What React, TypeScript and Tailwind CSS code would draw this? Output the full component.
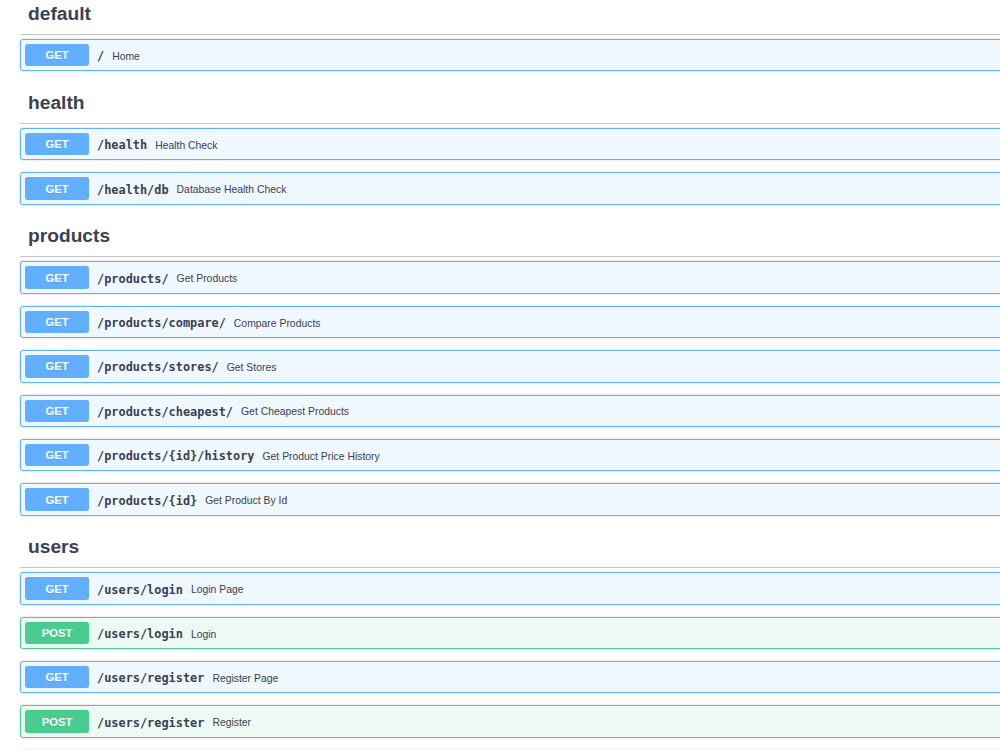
import React from "react";

type Op = { method: "GET" | "POST"; path: string; summary: string };
type Section = { tag: string; ops: Op[] };

const sections: Section[] = [
  { tag: "default", ops: [{ method: "GET", path: "/", summary: "Home" }] },
  {
    tag: "health",
    ops: [
      { method: "GET", path: "/health", summary: "Health Check" },
      { method: "GET", path: "/health/db", summary: "Database Health Check" },
    ],
  },
  {
    tag: "products",
    ops: [
      { method: "GET", path: "/products/", summary: "Get Products" },
      { method: "GET", path: "/products/compare/", summary: "Compare Products" },
      { method: "GET", path: "/products/stores/", summary: "Get Stores" },
      { method: "GET", path: "/products/cheapest/", summary: "Get Cheapest Products" },
      { method: "GET", path: "/products/{id}/history", summary: "Get Product Price History" },
      { method: "GET", path: "/products/{id}", summary: "Get Product By Id" },
    ],
  },
  {
    tag: "users",
    ops: [
      { method: "GET", path: "/users/login", summary: "Login Page" },
      { method: "POST", path: "/users/login", summary: "Login" },
      { method: "GET", path: "/users/register", summary: "Register Page" },
      { method: "POST", path: "/users/register", summary: "Register" },
      { method: "GET", path: "/users/me", summary: "Me" },
    ],
  },
];

function OpBlock({ op }: { op: Op }) {
  const isGet = op.method === "GET";
  return (
    <div
      className={
        "mb-[12px] h-[32.4px] rounded-[3px] border flex items-center px-[4px] shadow-[0_0_2.4px_rgba(0,0,0,0.19)] " +
        (isGet ? "bg-[#eff7ff] border-[#61affe]" : "bg-[#edfaf4] border-[#49cc90]")
      }
    >
      <div
        className={
          "w-[64px] h-[22.4px] pt-[1px] rounded-[2.4px] flex items-center justify-center text-white font-bold text-[11.2px] [text-shadow:0_1px_0_rgba(0,0,0,0.1)] " +
          (isGet ? "bg-[#61affe]" : "bg-[#49cc90]")
        }
        style={{ fontFamily: '"Liberation Sans", Arial, sans-serif' }}
      >
        {op.method}
      </div>
      <span
        className="px-[8px] pt-[4px] text-[11.9px] font-bold text-[#3b4151] whitespace-nowrap"
        style={{ fontFamily: '"DejaVu Sans Mono", monospace' }}
      >
        {op.path}
      </span>
      <span
        className="pt-[3px] text-[10.4px] text-[#3b4151] whitespace-nowrap"
        style={{ fontFamily: '"Liberation Sans", Arial, sans-serif' }}
      >
        {op.summary}
      </span>
    </div>
  );
}

export default function App() {
  return (
    <div className="w-[1000px] h-[750px] overflow-hidden bg-white">
      <div className="w-[1400px] px-[20px] mt-[-5.6px]">
        {sections.map((s) => (
          <div key={s.tag} className="flex flex-col">
            <h3
              className="h-[40.6px] mb-[4px] pl-[8px] flex items-center border-b border-[rgba(59,65,81,0.3)] text-[19.2px] font-bold text-[#3b4151]"
              style={{ fontFamily: '"Liberation Sans", Arial, sans-serif' }}
            >
              {s.tag}
            </h3>
            <div>
              {s.ops.map((op, i) => (
                <OpBlock key={i} op={op} />
              ))}
            </div>
          </div>
        ))}
      </div>
    </div>
  );
}
